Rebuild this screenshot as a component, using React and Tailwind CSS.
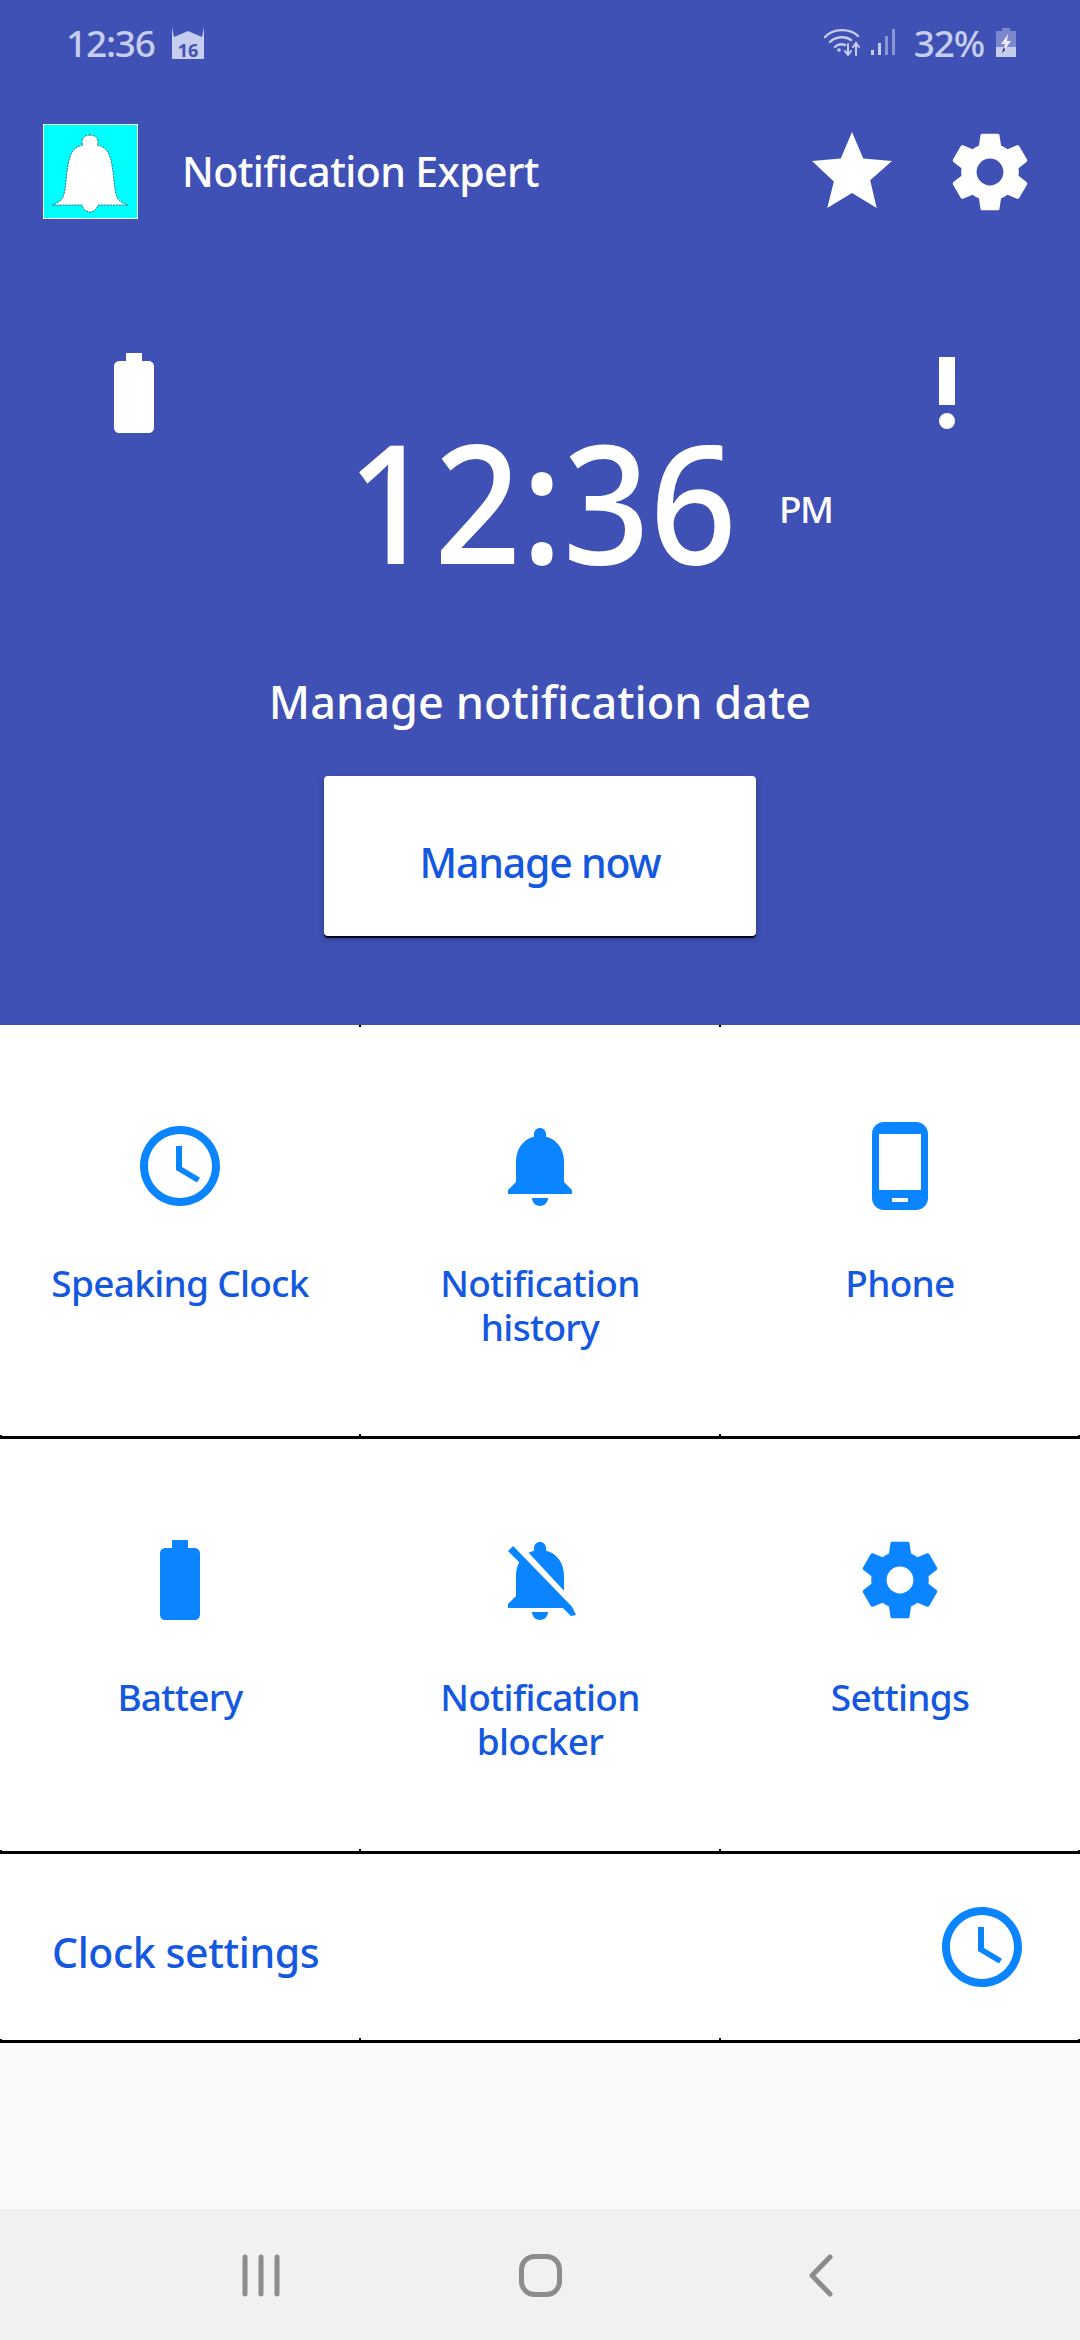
const P = {
  clock: "M11.99 2C6.47 2 2 6.48 2 12s4.47 10 9.99 10C17.52 22 22 17.52 22 12S17.52 2 11.99 2zM12 20c-4.42 0-8-3.58-8-8s3.58-8 8-8 8 3.58 8 8-3.58 8-8 8zm.5-13H11v6l5.25 3.15.75-1.23-4.5-2.67z",
  bell: "M12 22c1.1 0 2-.9 2-2h-4c0 1.1.89 2 2 2zm6-6v-5c0-3.07-1.64-5.64-4.5-6.32V4c0-.83-.67-1.5-1.5-1.5s-1.5.67-1.5 1.5v.68C7.63 5.36 6 7.92 6 11v5l-2 2v1h16v-1l-2-2z",
  phone: "M16 1H8C6.34 1 5 2.34 5 4v16c0 1.66 1.34 3 3 3h8c1.66 0 3-1.34 3-3V4c0-1.66-1.34-3-3-3zm-2 20h-4v-1h4v1zm3.25-3H6.75V4h10.5v14z",
  battery: "M15.67 4H14V2h-4v2H8.33C7.6 4 7 4.6 7 5.33v15.33C7 21.4 7.6 22 8.33 22h7.33c.74 0 1.34-.6 1.34-1.33V5.33C17 4.6 16.4 4 15.67 4z",
  bellOff: "M20 18.69L7.84 6.14 5.27 3.49 4 4.76l2.8 2.8v.01c-.52.99-.8 2.16-.8 3.42v5l-2 2v1h13.73l2 2L21 20.72l-1-2.03zM12 22c1.11 0 2-.89 2-2h-4c0 1.11.89 2 2 2zm6-7.32V11c0-3.08-1.64-5.64-4.5-6.32V4c0-.83-.67-1.5-1.5-1.5s-1.5.67-1.5 1.5v.68c-.15.03-.29.08-.42.12-.1.03-.2.07-.3.11h-.01c-.2.08-.4.17-.59.27-.01 0-.01 0-.02.01L18 14.68z",
  gear: "M19.43 12.98c.04-.32.07-.64.07-.98s-.03-.66-.07-.98l2.11-1.65c.19-.15.24-.42.12-.64l-2-3.46c-.12-.22-.39-.3-.61-.22l-2.49 1c-.52-.4-1.08-.73-1.69-.98l-.38-2.65C14.46 2.18 14.25 2 14 2h-4c-.25 0-.46.18-.49.42l-.38 2.65c-.61.25-1.17.59-1.69.98l-2.49-1c-.23-.09-.49 0-.61.22l-2 3.46c-.13.22-.07.49.12.64l2.11 1.65c-.04.32-.07.65-.07.98s.03.66.07.98l-2.11 1.65c-.19.15-.24.42-.12.64l2 3.46c.12.22.39.3.61.22l2.49-1c.52.4 1.08.73 1.69.98l.38 2.65c.03.24.24.42.49.42h4c.25 0 .46-.18.49-.42l.38-2.65c.61-.25 1.17-.59 1.69-.98l2.49 1c.23.09.49 0 .61-.22l2-3.46c.12-.22.07-.49-.12-.64l-2.11-1.65zM12 15.5c-1.93 0-3.5-1.57-3.5-3.5s1.57-3.5 3.5-3.5 3.5 1.57 3.5 3.5-1.57 3.5-3.5 3.5z",
  star: "M12 17.27L18.18 21l-1.64-6.91L22 9.24l-7.19-.61L12 2 9.19 8.63 2 9.24l5.46 5.15L5.82 21z",
  priority: "M10 3h4v12h-4z M12 17a2 2 0 1 0 0 4a2 2 0 1 0 0-4z",
};

function Icon({ d, className = "", size = "w-[96px] h-[96px]" }) {
  return (
    <svg viewBox="0 0 24 24" className={`${size} shrink-0 fill-current ${className}`}>
      <path d={d} />
    </svg>
  );
}

function Cell({ d, lines, size }) {
  return (
    <div className="flex flex-col items-center pt-[93px]">
      <div className="w-[96px] h-[96px] flex items-center justify-center">
        <Icon d={d} size={size} className="text-[#0a84ff]" />
      </div>
      <div className="mt-[47px] text-center text-[37px] leading-[44px] font-medium tracking-[-0.7px] text-[#1558e0]">
        {lines.map((l) => (
          <div key={l}>{l}</div>
        ))}
      </div>
    </div>
  );
}

function Tick({ className = "" }) {
  return <span className={`absolute w-[2px] h-[2px] bg-black ${className}`} />;
}

function Rule() {
  return (
    <div className="relative h-[3px] bg-black shrink-0">
      <Tick className="left-0 -top-[1px]" />
      <Tick className="left-[359px] -top-[2px]" />
      <Tick className="left-[719px] -top-[2px]" />
      <Tick className="right-0 -top-[1px]" />
    </div>
  );
}

export default function App() {
  return (
    <div className="w-[1080px] h-[2340px] flex flex-col overflow-hidden bg-[#fafafa] font-['Noto_Sans',sans-serif]">
      <div className="h-[1025px] shrink-0 bg-[#3f51b5] flex flex-col">
        {/* status bar */}
        <div className="h-[84px] shrink-0 flex items-center pl-[66px] pr-[64px] text-[#c6cdee]">
          <span className="text-[37px] leading-none font-medium tracking-[-1.2px]">12:36</span>
          <svg viewBox="0 0 32 33" className="ml-[17px] w-[32px] h-[33px] fill-current overflow-visible">
            <path d="M0 33V1l2 10 14-6 14 6 2-10v32z" />
            <text x="16" y="31" textAnchor="middle" fontSize="18" fontWeight="700" fill="#3f51b5">16</text>
          </svg>
          <div className="flex-1" />
          <svg viewBox="0 0 36 28" className="w-[36px] h-[28px]" fill="none" stroke="currentColor" strokeWidth="2.4" strokeLinecap="round">
            <path d="M1 9 C9 0 26 0 34 8" />
            <path d="M6 14 C12 8 22 8 27 12" />
            <path d="M11 19 C14 16 18 16 21 17" />
            <circle cx="15" cy="22" r="1.8" fill="currentColor" stroke="none" />
            <path d="M24 16v11M21 23l3 4 3-4M32 27V16M29 19l3-4 3 4" strokeWidth="2" />
          </svg>
          <svg viewBox="0 0 24 26" className="ml-[11px] w-[24px] h-[26px] fill-current">
            <rect x="0" y="21" width="3" height="5" />
            <rect x="7" y="14" width="3" height="12" />
            <rect x="14" y="7" width="3" height="19" opacity="0.55" />
            <rect x="21" y="0" width="3" height="26" opacity="0.55" />
          </svg>
          <span className="ml-[19px] text-[37px] leading-none font-medium tracking-[-1.2px]">32%</span>
          <svg viewBox="0 0 20 29" className="ml-[12px] w-[20px] h-[29px] fill-current">
            <path d="M6 0h8v3h6v26H0V3h6z" opacity="0.45" />
            <path d="M0 19h20v10H0z" />
            <path d="M12 6L5 16h4l-2 8 8-11h-4z" fill="#e9ecfa" />
            <path d="M8 19l-2 6 3-3z" fill="#1a1a40" />
          </svg>
        </div>

        {/* toolbar */}
        <div className="flex items-center mt-[40px] pl-[43px] h-[95px] shrink-0 text-white">
          <div className="w-[95px] h-[95px] shrink-0 bg-[#00ffff] border border-white">
            <svg viewBox="0 0 93 93" className="w-full h-full">
              <path
                d="M46 10c-5 0-8 3-8 7 0 1 0 2 1 3-6 1-11 5-13 12-2 6-3 14-4 24-1 10-2 16-5 19-2 2-5 4-9 5h30c1 4 4 7 8 7s7-3 8-7h30c-4-1-7-3-9-5-3-3-4-9-5-19-1-10-2-18-4-24-2-7-7-11-13-12 1-1 1-2 1-3 0-4-3-7-8-7z"
                fill="#ffffff"
                stroke="#0a3a4a"
                strokeWidth="0.7"
                strokeDasharray="2 1"
              />
            </svg>
          </div>
          <span className="ml-[44px] text-[41px] leading-none font-medium tracking-[-0.6px]">Notification Expert</span>
          <div className="flex-1" />
          <Icon d={P.star} className="mr-[44px]" />
          <Icon d={P.gear} size="w-[92px] h-[92px]" className="mr-[44px]" />
        </div>

        {/* clock area */}
        <div className="flex items-start mt-[126px] px-[85px] text-white">
          <Icon d={P.battery} className="translate-x-[1px]" />
          <div className="flex-1 flex items-start pl-[166px] pt-[73px] h-[340px]">
            <div className="w-[400px] shrink-0">
              <span className="block w-max origin-left scale-x-[0.923] text-[165px] leading-none font-medium whitespace-nowrap">12:36</span>
            </div>
            <span className="ml-[32px] mt-[72px] text-[37px] leading-none font-medium tracking-[-1.5px]">PM</span>
          </div>
          <Icon d={P.priority} />
        </div>
        <div className="mt-[-13px] text-center text-white text-[45px] leading-[60px] font-medium tracking-[0.05px]">Manage notification date</div>
        <div className="mt-[44px] mx-auto w-[432px] h-[160px] flex items-center justify-center pt-[14px] rounded-[4px] bg-white shadow-[0_2px_0_#05051e,0_3px_6px_rgba(0,0,0,0.3)] text-[41px] font-medium tracking-[-1.2px] text-[#1558e0]">
          Manage now
        </div>
      </div>

      {/* grid */}
      <div className="relative bg-white shrink-0">
        <Tick className="left-[359px] top-0" />
        <Tick className="left-[719px] top-0" />
        <div className="grid grid-cols-3 h-[411px]">
          <Cell d={P.clock} lines={["Speaking Clock"]} />
          <Cell d={P.bell} lines={["Notification", "history"]} />
          <Cell d={P.phone} lines={["Phone"]} />
        </div>
        <Rule />
        <div className="grid grid-cols-3 h-[412px]">
          <Cell d={P.battery} lines={["Battery"]} />
          <Cell d={P.bellOff} lines={["Notification", "blocker"]} />
          <Cell d={P.gear} size="w-[92px] h-[92px]" lines={["Settings"]} />
        </div>
        <Rule />
        <div className="h-[186px] flex items-center pl-[52px] pr-[50px]">
          <span className="mt-[12px] text-[41px] font-medium tracking-[-0.4px] text-[#1558e0]">Clock settings</span>
          <div className="flex-1" />
          <Icon d={P.clock} className="text-[#0a84ff]" />
        </div>
        <Rule />
      </div>

      <div className="flex-1" />

      {/* nav */}
      <div className="h-[131px] shrink-0 bg-[#f1f1f1] flex items-center">
        <svg viewBox="0 0 1080 131" className="w-full h-full" fill="none" stroke="#8c8c8c" strokeWidth="5" strokeLinecap="round" strokeLinejoin="round">
          <path d="M245 48v37M261 48v37M277 48v37" />
          <rect x="521.5" y="47.5" width="38" height="38" rx="13" />
          <path d="M830 48L812 66.5 830 85" />
        </svg>
      </div>
    </div>
  );
}
